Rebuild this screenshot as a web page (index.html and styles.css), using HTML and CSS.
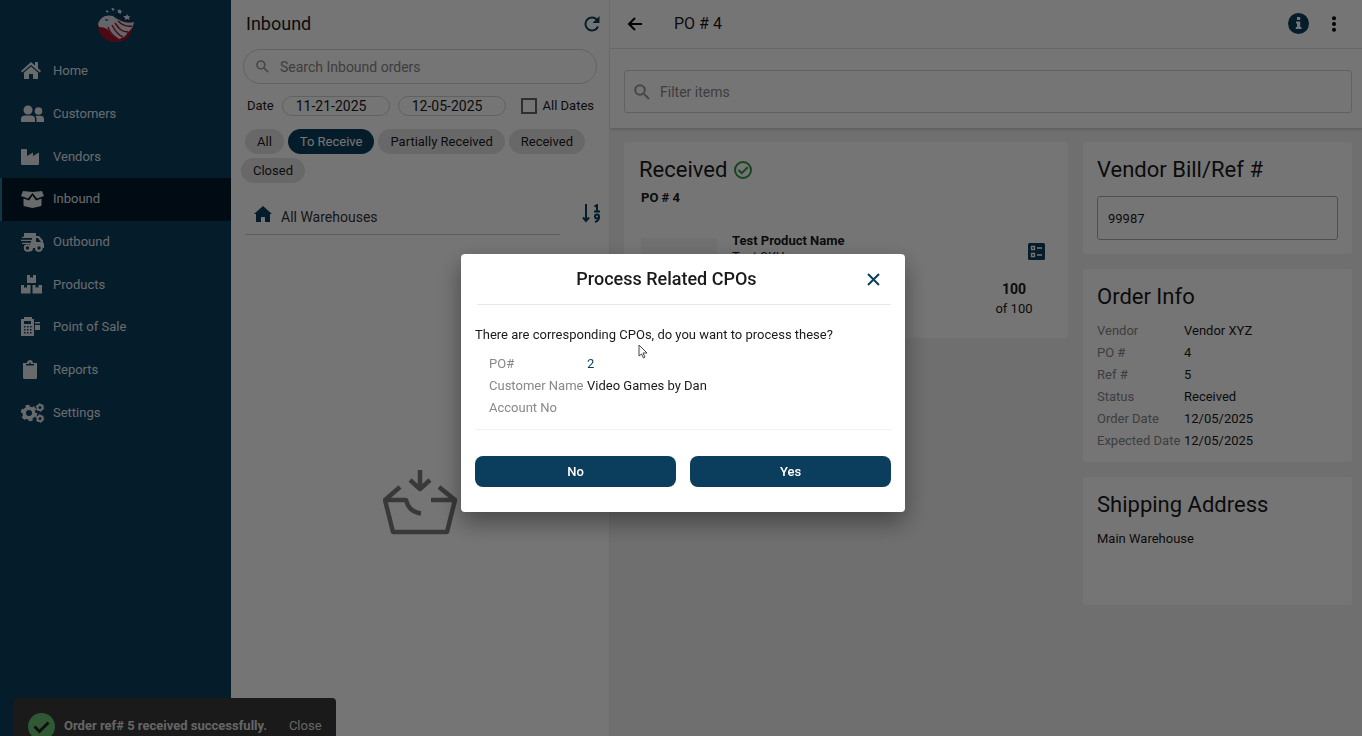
FILE: index.html
```html
<!DOCTYPE html>
<html lang="en">
<head>
<meta charset="utf-8">
<title>Inbound - PO # 4</title>
<link rel="stylesheet" href="styles.css">
</head>
<body>
<div class="app">
  <aside class="sidebar">
    <div class="brand">
      <svg width="38" height="36" viewBox="0 0 38 36" role="img" aria-label="Eagle logo">
        <path d="M1 17C1 27 9 34 19 34c10 0 17-8 17-17C25 24 10 14 1 17z" fill="#a5142b"/>
        <path d="M1 16C3 9 9 6 16 8c6 5 14 8 21 6-1 5-3 8-6 10-2 4-5 6-9 7-6-1-9-6-11-9-2-2-5-3-9-3z" fill="#dcdfe5"/>
        <path d="M15 17c3 6 6 10 11 12M18 15c4 6 7 9 13 9M21 13c4 4 8 6 14 5M11 19c1 5 5 9 10 12" fill="none" stroke="#a5142b" stroke-width="1.500"/>
        <path d="M19 7c6-1 12 1 18 6-6 1-12-1-18-6z" fill="#122c5c"/>
        <path d="M8 11l4 1-3 1z" fill="#333"/>
        <path d="M30 6l1 2h2l-1 2 1 2-3-1-2 1v-2l-2-2h3zM23 1l1 2h2l-2 1v2l-2-1-1 0v-2l-1-1h2zM16 0l1 1 1 0-1 1v1l-1-1-1 1v-2l-1-1h1zM10 2l1 1h1l-1 1v1l-1-1-1 0v-1z" fill="#dcdfe5"/>
      </svg>
    </div>
    <nav class="menu" aria-label="Main">
      <a class="menu-item" href="#"><svg class="menu-icon" viewBox="0 0 24 20"><path d="M10 1L0 10l1.200 1.500L10 4l8.800 7.500L20 10l-3-2.700V1h-3v3.500z"/><path d="M10 5.500l-7 6V18h5v-5h4v5h5v-6.500z"/></svg>Home</a>
      <a class="menu-item" href="#"><svg class="menu-icon" viewBox="0 0 24 20"><circle cx="7" cy="6" r="4.500"/><path d="M0 18v-3q0-3.500 4-3.500h6q4 0 4 3.500v3z"/><circle cx="17.500" cy="7" r="3.800"/><path d="M15.500 18v-3q0-2-1-3.200h4.500q4 0 4 3.200v3z"/></svg>Customers</a>
      <a class="menu-item" href="#"><svg class="menu-icon" viewBox="0 0 24 20"><path d="M1 2h4q1 0 1 1v6l6-3.500v3.500l6-3.500V17q0 1-1 1H1q-1 0-1-1V3q0-1 1-1z"/></svg>Vendors</a>
      <a class="menu-item active" href="#" aria-current="page"><svg class="menu-icon" viewBox="0 0 24 20"><path d="M2 2l9.500 1L21 2l2 5-7 2.500L11.500 4 7 9.500 0 7z"/><path d="M2.500 9.500L8 11.500l3.500-5 3.500 5 5.500-2V16q0 1-1 1.300L11.500 19l-8-1.700q-1-.3-1-1.300z"/></svg>Inbound</a>
      <a class="menu-item" href="#"><svg class="menu-icon" viewBox="0 0 24 20"><path fill-rule="evenodd" d="M3 1h12v3h3l4 4.500v2l1 1V16h-2a3.500 3.500 0 0 1-7 0h-2a3.500 3.500 0 0 1-7 0H3v-2.500h6V12H1v-1.200h9V9H0V7.800h11V6H1V4.800h2zm12 5v4h5l-3-4z"/><circle cx="6.500" cy="16" r="2.700" class="menu-wheel"/><circle cx="18" cy="16" r="2.700" class="menu-wheel"/></svg>Outbound</a>
      <a class="menu-item" href="#"><svg class="menu-icon" viewBox="0 0 24 20"><path d="M6 0h3v3l1.500-1L12 3V0h3v8H6zM0 10h3v3l1.500-1L6 13v-3h3.500v8.500H0zM11.500 10h3v3l1.500-1 1.500 1v-3H21v8.500h-9.500z"/></svg>Products</a>
      <a class="menu-item" href="#"><svg class="menu-icon" viewBox="0 0 24 20"><path fill-rule="evenodd" d="M0 2h3V0h8v2h2v17H0zm3 2v3h7V4zm0 5v1.500h1.500V9zm3 0v1.500h1.500V9zm3 0v1.500h1.500V9zm-6 3v1.500h1.500V12zm3 0v1.500h1.500V12zm3 0v1.500h1.500V12zm-6 3v1.500h1.500V15zm3 0v1.500h1.500V15zm3 0v1.500h1.500V15z"/><path d="M14 5h5v1.500h-5zM14 8h5v5h-5z"/></svg>Point of Sale</a>
      <a class="menu-item" href="#"><svg class="menu-icon" viewBox="0 0 24 20"><path fill-rule="evenodd" d="M2 3h4q.5-3 3-3t3 3h4v14.500q0 1.500-1.500 1.500h-11Q2 19 2 17.500zm3 1v1.500h8V4h-3q0-1.500-1-1.500T8 4z"/></svg>Reports</a>
      <a class="menu-item" href="#"><svg class="menu-icon" viewBox="0 0 24 20"><g fill="none" stroke="currentColor"><circle cx="8" cy="10" r="4.800" stroke-width="3.600"/><circle cx="8" cy="10" r="7" stroke-width="2.500" stroke-dasharray="4 3.330"/><circle cx="19" cy="4.500" r="2.500" stroke-width="2"/><circle cx="19" cy="4.500" r="3.800" stroke-width="1" stroke-dasharray="2 2"/><circle cx="19" cy="15.500" r="2.500" stroke-width="2"/><circle cx="19" cy="15.500" r="3.800" stroke-width="1" stroke-dasharray="2 2"/></g></svg>Settings</a>
    </nav>
  </aside>

  <section class="list-pane">
    <header class="list-head">
      <h1 class="list-title">Inbound</h1>
      <button class="icon-button" aria-label="Refresh"><svg width="16" height="16" viewBox="0 0 16 16"><path d="M14 10.500A6.500 6.500 0 1 1 12.800 3.600L14 5" fill="none" stroke="currentColor" stroke-width="2"/><path d="M15.500 0v7h-7z" fill="currentColor"/></svg></button>
    </header>
    <label class="search">
      <svg class="search-icon" width="13" height="13" viewBox="0 0 16 16"><circle cx="6" cy="6" r="4.800"/><path d="M10 10l5 5"/></svg>
      <input class="search-input" type="search" placeholder="Search Inbound orders" aria-label="Search Inbound orders">
    </label>
    <div class="dates">
      <label for="from">Date</label>
      <input class="date-input" id="from" type="text" value="11-21-2025">
      <input class="date-input" type="text" value="12-05-2025" aria-label="To date">
      <label class="all-dates"><input class="check" type="checkbox">All Dates</label>
    </div>
    <div class="chips">
      <button class="chip">All</button>
      <button class="chip selected">To Receive</button>
      <button class="chip">Partially Received</button>
      <button class="chip">Received</button>
      <button class="chip">Closed</button>
    </div>
    <div class="filter-row">
      <div class="warehouse">
        <svg class="home" width="18" height="16" viewBox="0 0 18 16" fill="currentColor"><path d="M9 0l9 8h-2v8h-5v-5H7v5H2V8H0z"/></svg>
        <select class="warehouse-select" aria-label="Warehouse"><option>All Warehouses</option></select>
      </div>
      <button class="icon-button" aria-label="Sort"><svg width="19" height="19" viewBox="0 0 19 19" fill="none" stroke="currentColor" stroke-width="2"><path d="M4 0v17M1 13.500l3 3.500 3-3.500"/><path d="M12.500 2.500L15 1.200V7M12 7.500h6"/><circle cx="15" cy="12.500" r="2"/><path d="M17 12.500q0 4.500-4 5.500"/></svg></button>
    </div>
    <div class="empty">
      <svg width="74" height="67" viewBox="0 0 74 67" fill="none" stroke="currentColor" stroke-width="4.500" stroke-linejoin="round"><path d="M37 1v18M27 11l10 9 10-9"/><path d="M17 18L2 31l8 32h54l8-32H48M2 31h21q3 12 15 13.500M56 18l16 13"/></svg>
    </div>
  </section>

  <main class="detail">
    <header class="detail-head">
      <button class="icon-button back" aria-label="Back"><svg width="16" height="14" viewBox="0 0 16 14" fill="none" stroke="currentColor" stroke-width="2"><path d="M15 7H2M8 1L2 7l6 6"/></svg></button>
      <h2 class="detail-title">PO # 4</h2>
      <button class="icon-button info" aria-label="Information"><svg width="21" height="21" viewBox="0 0 21 21"><circle cx="10.500" cy="10.500" r="10.500" fill="currentColor"/><path d="M9 4h3.200v3H9zM8 8.500h4.200V14h1.300v2H7.800v-2H9v-3.500H8z" fill="#fff"/></svg></button>
      <button class="icon-button more" aria-label="More"><svg width="6" height="16" viewBox="0 0 6 16" fill="currentColor"><circle cx="3" cy="2.200" r="2"/><circle cx="3" cy="8" r="2"/><circle cx="3" cy="13.800" r="2"/></svg></button>
    </header>
    <div class="filter-bar">
      <label class="filter">
        <svg class="search-icon" width="16" height="16" viewBox="0 0 16 16"><circle cx="6" cy="6" r="4.800"/><path d="M10 10l5 5"/></svg>
        <input class="search-input" type="search" placeholder="Filter items" aria-label="Filter items">
      </label>
    </div>
    <div class="detail-body">
      <section class="card received">
        <h3 class="card-title">Received
          <svg width="18" height="18" viewBox="0 0 18 18" fill="none" stroke="#2c9a3c" stroke-width="2"><circle cx="9" cy="9" r="8"/><path d="M4.500 9l3.200 3.200 6-6"/></svg>
        </h3>
        <p class="po">PO # 4</p>
        <div class="product">
          <div class="thumb"></div>
          <div class="product-text"><strong>Test Product Name</strong><span>Test SKU</span></div>
          <div class="product-side">
            <button class="icon-button" aria-label="Details"><svg width="17" height="17" viewBox="0 0 17 17"><rect width="17" height="17" rx="1.500" fill="currentColor"/><g fill="none" stroke="#fff" stroke-width="1.300"><path d="M3.500 3.500h3v3h-3zM3.500 10.500h3v3h-3zM9 5h5M9 12h5"/></g></svg></button>
            <strong class="qty">100</strong>
            <span class="qty-of">of 100</span>
          </div>
        </div>
      </section>
      <div class="side">
        <section class="card">
          <h3 class="card-title"><label for="bill">Vendor Bill/Ref #</label></h3>
          <input class="bill" id="bill" type="text" value="99987">
        </section>
        <section class="card order">
          <h3 class="card-title">Order Info</h3>
          <dl class="info-list">
            <dt>Vendor</dt><dd>Vendor XYZ</dd>
            <dt>PO #</dt><dd>4</dd>
            <dt>Ref #</dt><dd>5</dd>
            <dt>Status</dt><dd>Received</dd>
            <dt>Order Date</dt><dd>12/05/2025</dd>
            <dt>Expected Date</dt><dd>12/05/2025</dd>
          </dl>
        </section>
        <section class="card shipping">
          <h3 class="card-title">Shipping Address</h3>
          <p class="address">Main Warehouse</p>
        </section>
      </div>
    </div>
  </main>
</div>

<div class="toast" role="status">
  <svg width="27" height="27" viewBox="0 0 27 27"><circle cx="13.500" cy="13.500" r="13.500" fill="#6cbf74"/><path d="M6.500 13.500l5 5 9-9" fill="none" stroke="#222" stroke-width="3"/></svg>
  <span class="toast-text">Order ref# 5 received successfully.</span>
  <button class="toast-close">Close</button>
</div>

<div class="backdrop">
  <div class="dialog" role="dialog" aria-modal="true" aria-labelledby="dialog-title">
    <header class="dialog-head">
      <h2 class="dialog-title" id="dialog-title">Process Related CPOs</h2>
      <button class="icon-button dialog-close" aria-label="Close dialog"><svg width="13" height="13" viewBox="0 0 13 13" fill="none" stroke="currentColor" stroke-width="2"><path d="M1 1l11 11M12 1L1 12"/></svg></button>
    </header>
    <p class="question">There are corresponding CPOs, do you want to process these?</p>
    <dl class="info-list cpo">
      <dt>PO#</dt><dd><a class="po-link" href="#">2</a></dd>
      <dt>Customer Name</dt><dd>Video Games by Dan</dd>
      <dt>Account No</dt><dd></dd>
    </dl>
    <div class="actions">
      <button class="action">No</button>
      <button class="action">Yes</button>
    </div>
    <svg class="pointer" width="10" height="15" viewBox="0 0 10 15" aria-hidden="true"><path d="M1 1v11l2.500-2 2 4 1.500-1-2-4H9z" fill="#fff" stroke="#444"/></svg>
  </div>
</div>
</body>
</html>
```

FILE: styles.css
```css
* { box-sizing: border-box; }

body {
  margin: 0;
  font-family: Roboto, "Liberation Sans", sans-serif;
  font-size: 13px;
  line-height: 22px;
  color: #1a1a1a;
}

h1, h2, h3, p, dl, dd { margin: 0; font-weight: 400; }
button, input, select { font: inherit; color: inherit; }
svg { display: block; flex: none; }

.app {
  display: grid;
  grid-template-columns: 231px 379px 1fr;
  min-height: 100vh;
}

.icon-button {
  display: flex;
  padding: 0;
  border: 0;
  background: none;
  color: #0b3d5c;
}

/* Sidebar */
.sidebar { background: #0b3d5c; color: #e4e8ec; }
.brand {
  display: flex;
  justify-content: center;
  height: 50px;
  padding-top: 8px;
}
.menu { display: grid; grid-auto-rows: 1fr; height: 384px; }
.menu-item {
  display: flex;
  align-items: center;
  gap: 8px;
  padding-left: 21px;
  color: inherit;
  text-decoration: none;
}
.menu-item.active { background: #001a2b; box-shadow: inset 2px 0 #2a7398; }
.menu-icon { width: 24px; height: 20px; fill: currentColor; }
.menu-wheel { fill: #0b3d5c; stroke: currentColor; stroke-width: 2; }

/* Order list */
.list-pane {
  display: flex;
  flex-direction: column;
  border-right: 1px solid #ececec;
  background: #fff;
}
.list-head {
  display: flex;
  align-items: center;
  justify-content: space-between;
  height: 49px;
  padding: 0 9px 1px 15px;
}
.list-title { font-size: 18px; }
.search, .filter {
  display: flex;
  align-items: center;
  border: 1px solid #d4d4d4;
}
.search {
  gap: 11px;
  height: 35px;
  margin: 0 12px;
  padding: 0 12px;
  border-radius: 18px;
}
.search-icon { fill: none; stroke: #999; stroke-width: 2; }
.search-input {
  flex: 1;
  min-width: 0;
  padding: 0;
  border: 0;
  background: none;
  outline: 0;
  font-size: 14px;
}
.search-input::placeholder { color: #888; opacity: 1; }
.dates {
  display: flex;
  align-items: center;
  gap: 8px;
  margin-top: 11px;
  padding: 0 15px 0 16px;
}
.date-input {
  width: 108px;
  height: 20px;
  padding: 0 13px;
  border: 1px solid #d4d4d4;
  border-radius: 10px;
  background: none;
  font-size: 14px;
}
.all-dates { display: flex; align-items: center; gap: 6px; margin-left: auto; }
.check {
  appearance: none;
  width: 16px;
  height: 16px;
  margin: 0;
  border: 2px solid #666;
}
.chips {
  display: flex;
  flex-wrap: wrap;
  gap: 4px;
  margin-top: 12px;
  padding-left: 10px;
}
.chip {
  padding: 0 12px;
  border: 0;
  border-radius: 13px;
  background: #e3e3e3;
  line-height: 25px;
}
.chip:first-child { margin-left: 4px; }
.chip.selected { background: #0b3d5c; color: #fff; }
.filter-row {
  display: flex;
  justify-content: space-between;
  margin-top: 16px;
  padding: 0 8px 0 14px;
}
.filter-row .icon-button { padding-top: 5px; }
.warehouse {
  display: flex;
  align-items: center;
  gap: 9px;
  width: 315px;
  height: 36px;
  padding-left: 9px;
  border-bottom: 1px solid #ccc;
  color: #0b3d5c;
}
.home { margin-bottom: 6px; }
.warehouse-select {
  appearance: none;
  flex: 1;
  padding: 0;
  border: 0;
  background: none;
  font-size: 14px;
  color: #333;
}
.empty {
  flex: 1;
  display: flex;
  align-items: center;
  justify-content: center;
  padding-top: 34px;
  color: #7c7c7c;
}

/* Order detail */
.detail { display: flex; flex-direction: column; background: #f2f2f2; }
.detail-head {
  display: flex;
  align-items: center;
  height: 49px;
  padding: 0 25px 1px 17px;
  border-bottom: 1px solid #e4e4e4;
  background: #fff;
}
.back, .more { color: #000; }
.detail-title { margin-left: 31px; font-size: 16px; }
.info { margin-left: auto; }
.more { margin-left: 22px; }
.filter-bar {
  padding: 21px 10px 15px 14px;
  border-bottom: 1px solid #d4d4d4;
  background: #fff;
  box-shadow: 0 1px 2px #d4d4d4;
}
.filter { gap: 10px; height: 43px; padding: 0 9px; border-radius: 3px; }
.detail-body {
  display: grid;
  grid-template-columns: 1fr 269px;
  align-items: start;
  gap: 15px;
  padding: 13px 10px 15px 14px;
}
.card {
  padding: 13px 14px 14px;
  border-radius: 3px;
  background: #fff;
}
.card-title {
  display: flex;
  align-items: center;
  gap: 7px;
  font-size: 22px;
  line-height: 30px;
}
.received { padding-left: 15px; }
.po { margin: 2px 2px 0; font-weight: 700; }
.product { display: flex; gap: 15px; margin-top: 29px; padding-left: 2px; }
.thumb { width: 76px; height: 76px; background: #f5f5f5; }
.product-text {
  display: flex;
  flex-direction: column;
  line-height: 16px;
  margin-top: -5px;
}
.product-side {
  display: grid;
  grid-template-columns: 44px;
  justify-items: center;
  margin: 5px 18px 5px auto;
  line-height: 20px;
  text-align: center;
}
.product-side .icon-button { margin-left: 44px; }
.qty { margin-top: 19px; font-size: 14px; }
.qty-of { white-space: nowrap; }
.side { display: grid; gap: 15px; }
.bill {
  display: block;
  width: 100%;
  height: 44px;
  margin-top: 11px;
  padding: 0 10px;
  border: 1px solid #aaa;
  border-radius: 3px;
  background: none;
}
.info-list { display: grid; grid-template-columns: 87px 1fr; margin-top: 8px; }
.info-list dt { color: #888; white-space: nowrap; }
.order { padding-bottom: 10px; }
.address { margin-top: 8px; }
.shipping { min-height: 128px; }

/* Notification */
.toast {
  position: fixed;
  left: 14px;
  bottom: -18px;
  display: flex;
  align-items: center;
  height: 56px;
  padding: 0 14px;
  border-radius: 4px;
  background: #393939;
  color: #ddd;
}
.toast-text { margin-left: 9px; font-weight: 700; }
.toast-close {
  margin-left: 22px;
  padding: 0;
  border: 0;
  background: none;
}

/* Dialog */
.backdrop {
  position: fixed;
  inset: 0;
  display: flex;
  align-items: center;
  justify-content: center;
  padding: 30px 0 0 4px;
  background: rgba(0, 0, 0, .54);
}
.dialog {
  position: relative;
  width: 444px;
  padding: 0 14px 25px;
  border-radius: 4px;
  background: #fff;
  box-shadow: 0 10px 24px rgba(0, 0, 0, .4);
}
.dialog-head {
  display: flex;
  align-items: center;
  height: 51px;
  margin-left: 2px;
  border-bottom: 1px solid #e8e8e8;
}
.dialog-title { flex: 1; font-size: 18px; font-weight: 500; text-align: center; }
.dialog-close { padding: 0 11px; }
.question { margin-top: 19px; }
.cpo {
  grid-template-columns: 98px 1fr;
  grid-auto-rows: 22px;
  margin-top: 7px;
  padding: 0 14px 10px;
  border-bottom: 1px solid #f0f0f0;
}
.po-link { color: #0b3d5c; text-decoration: none; }
.actions {
  display: grid;
  grid-template-columns: 1fr 1fr;
  gap: 14px;
  margin-top: 26px;
}
.action {
  height: 31px;
  border: 0;
  border-radius: 8px;
  background: #0b3d5c;
  color: #fff;
  font-weight: 500;
}
.pointer { position: absolute; left: 177px; top: 90px; }
```
